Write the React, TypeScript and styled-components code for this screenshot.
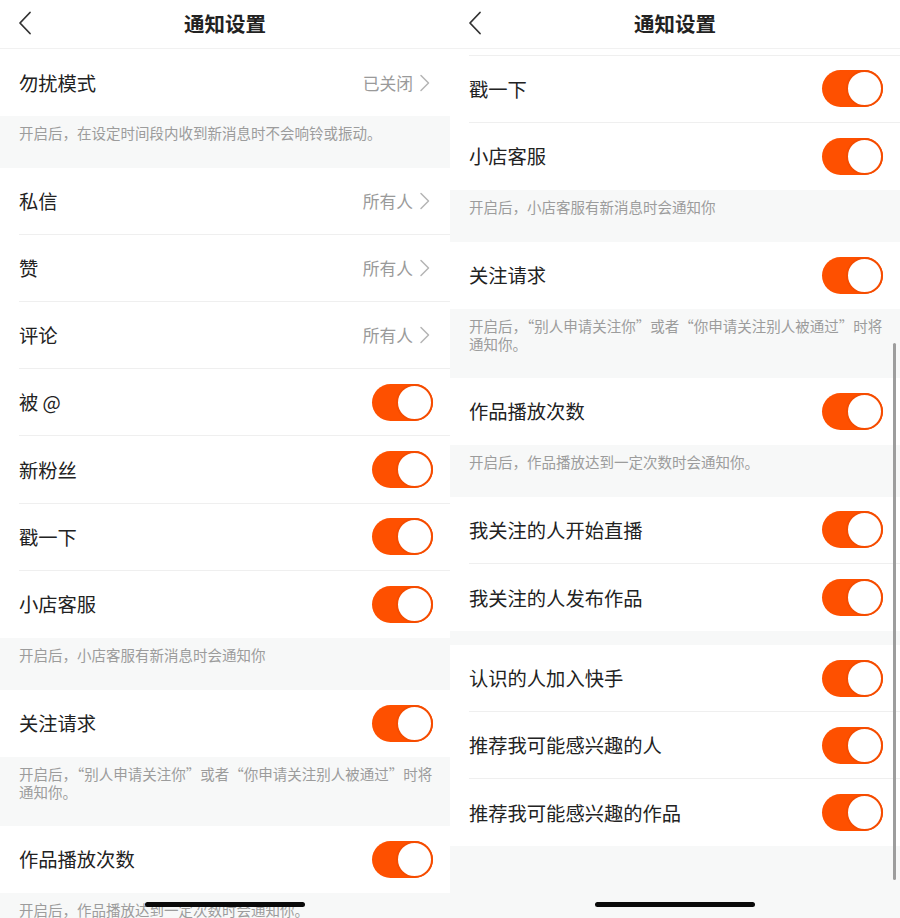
import * as React from 'react';
import styled, { createGlobalStyle } from 'styled-components';

type Item = {
  label: string;
  value?: string;
};

type Group = {
  items: Item[];
  note?: string;
  gap?: number;
};

const groups: Group[] = [
  {
    items: [{ label: '勿扰模式', value: '已关闭' }],
    note: '开启后，在设定时间段内收到新消息时不会响铃或振动。',
  },
  {
    items: [
      { label: '私信', value: '所有人' },
      { label: '赞', value: '所有人' },
      { label: '评论', value: '所有人' },
      { label: '被 @' },
      { label: '新粉丝' },
      { label: '戳一下' },
      { label: '小店客服' },
    ],
    note: '开启后，小店客服有新消息时会通知你',
  },
  {
    items: [{ label: '关注请求' }],
    note: '开启后，“别人申请关注你”或者“你申请关注别人被通过”时将通知你。',
  },
  {
    items: [{ label: '作品播放次数' }],
    note: '开启后，作品播放达到一定次数时会通知你。',
  },
  {
    items: [{ label: '我关注的人开始直播' }, { label: '我关注的人发布作品' }],
    gap: 14,
  },
  {
    items: [
      { label: '认识的人加入快手' },
      { label: '推荐我可能感兴趣的人' },
      { label: '推荐我可能感兴趣的作品' },
    ],
  },
];

const GlobalStyle = createGlobalStyle`
  html, body {
    margin: 0;
    padding: 0;
    background: #ffffff;
  }
  body {
    font-family: "Noto Sans CJK SC", "Noto Sans", sans-serif;
    -webkit-font-smoothing: antialiased;
  }
  * {
    box-sizing: border-box;
  }
`;

const Toggle = () => (
  <Track>
    <Knob />
  </Track>
);

const Chevron = () => (
  <svg width="12" height="18" viewBox="0 0 12 18">
    <polyline
      points="2,1.5 9.5,9 2,16.5"
      fill="none"
      stroke="#b5b5b5"
      strokeWidth="1.5"
      strokeLinecap="round"
      strokeLinejoin="round"
    />
  </svg>
);

const BackIcon = () => (
  <svg width="14" height="24" viewBox="0 0 14 24">
    <polyline
      points="12,1.5 2,12 12,22.5"
      fill="none"
      stroke="#333"
      strokeWidth="1.8"
      strokeLinecap="round"
      strokeLinejoin="round"
    />
  </svg>
);

const Phone: React.FC<{ offset: number; showThumb?: boolean }> = ({
  offset,
  showThumb,
}) => {
  const scrollRef = React.useRef<HTMLDivElement>(null);

  React.useLayoutEffect(() => {
    if (scrollRef.current) scrollRef.current.scrollTop = offset;
  }, [offset]);

  return (
    <Screen>
      <Header>
        <BackButton>
          <BackIcon />
        </BackButton>
        <Title>通知设置</Title>
      </Header>

      <Scroller ref={scrollRef}>
        {groups.map((group, gi) => (
          <React.Fragment key={gi}>
            {group.items.map((item, i) => (
              <Row key={item.label}>
                <RowInner isLast={i === group.items.length - 1}>
                  <Label>{item.label}</Label>
                  {item.value ? (
                    <Value>
                      {item.value}
                      <Chevron />
                    </Value>
                  ) : (
                    <Toggle />
                  )}
                </RowInner>
              </Row>
            ))}
            {group.note && <Note>{group.note}</Note>}
            {group.gap && <Gap size={group.gap} />}
          </React.Fragment>
        ))}
        <Gap size={90} />
      </Scroller>

      {showThumb && <Thumb />}
      <HomeBar />
    </Screen>
  );
};

export default function App() {
  return (
    <>
      <GlobalStyle />
      <Page>
        <Phone offset={0} />
        <Phone offset={448} showThumb />
      </Page>
    </>
  );
}

const Page = styled.div`
  display: flex;
  width: 900px;
  height: 918px;
`;

const Screen = styled.div`
  position: relative;
  display: flex;
  flex-direction: column;
  width: 450px;
  height: 918px;
  overflow: hidden;
  background: #f7f8f8;
`;

const Header = styled.header`
  position: relative;
  display: flex;
  align-items: center;
  justify-content: center;
  flex-shrink: 0;
  height: 49px;
  background: #ffffff;
  border-bottom: 1px solid #f1f1f1;
`;

const BackButton = styled.div`
  position: absolute;
  left: 18px;
  top: 11px;
  display: flex;
`;

const Title = styled.h1`
  margin: 0;
  font-size: 20.5px;
  font-weight: 600;
  color: #222;
  line-height: 28px;
  padding-bottom: 2px;
`;

const Scroller = styled.div`
  flex: 1;
  overflow: hidden;
`;

const Row = styled.div`
  padding-left: 19px;
  background: #ffffff;
`;

const RowInner = styled.div<{ isLast: boolean }>`
  display: flex;
  align-items: center;
  justify-content: space-between;
  height: 67.1px;
  padding-right: 17px;
  border-bottom: ${({ isLast }) => (isLast ? 'none' : '1px solid #efefef')};
`;

const Label = styled.span`
  font-size: 19.3px;
  color: #222;
  line-height: 26px;
`;

const Value = styled.span`
  display: flex;
  align-items: center;
  gap: 6px;
  font-size: 16.8px;
  color: #9a9a9a;
  padding-right: 2px;
`;

const Track = styled.div`
  position: relative;
  display: flex;
  justify-content: flex-end;
  width: 61px;
  height: 37px;
  border-radius: 19px;
  background: #fe5000;
`;

const Knob = styled.div`
  width: 37px;
  height: 37px;
  border-radius: 50%;
  background: #ffffff;
  border: 2px solid #f54c00;
`;

const Note = styled.div`
  min-height: 52px;
  padding: 8px 10px 25px 19px;
  font-size: 14.5px;
  line-height: 18px;
  color: #9c9c9c;
  background: #f7f8f8;
`;

const Gap = styled.div<{ size: number }>`
  height: ${({ size }) => size}px;
`;

const Thumb = styled.div`
  position: absolute;
  right: 4px;
  top: 343px;
  width: 3.5px;
  height: 537px;
  border-radius: 2px;
  background: #9d9d9d;
`;

const HomeBar = styled.div`
  position: absolute;
  left: 145px;
  bottom: 11px;
  width: 160px;
  height: 5px;
  border-radius: 3px;
  background: #0a0a0a;
`;
